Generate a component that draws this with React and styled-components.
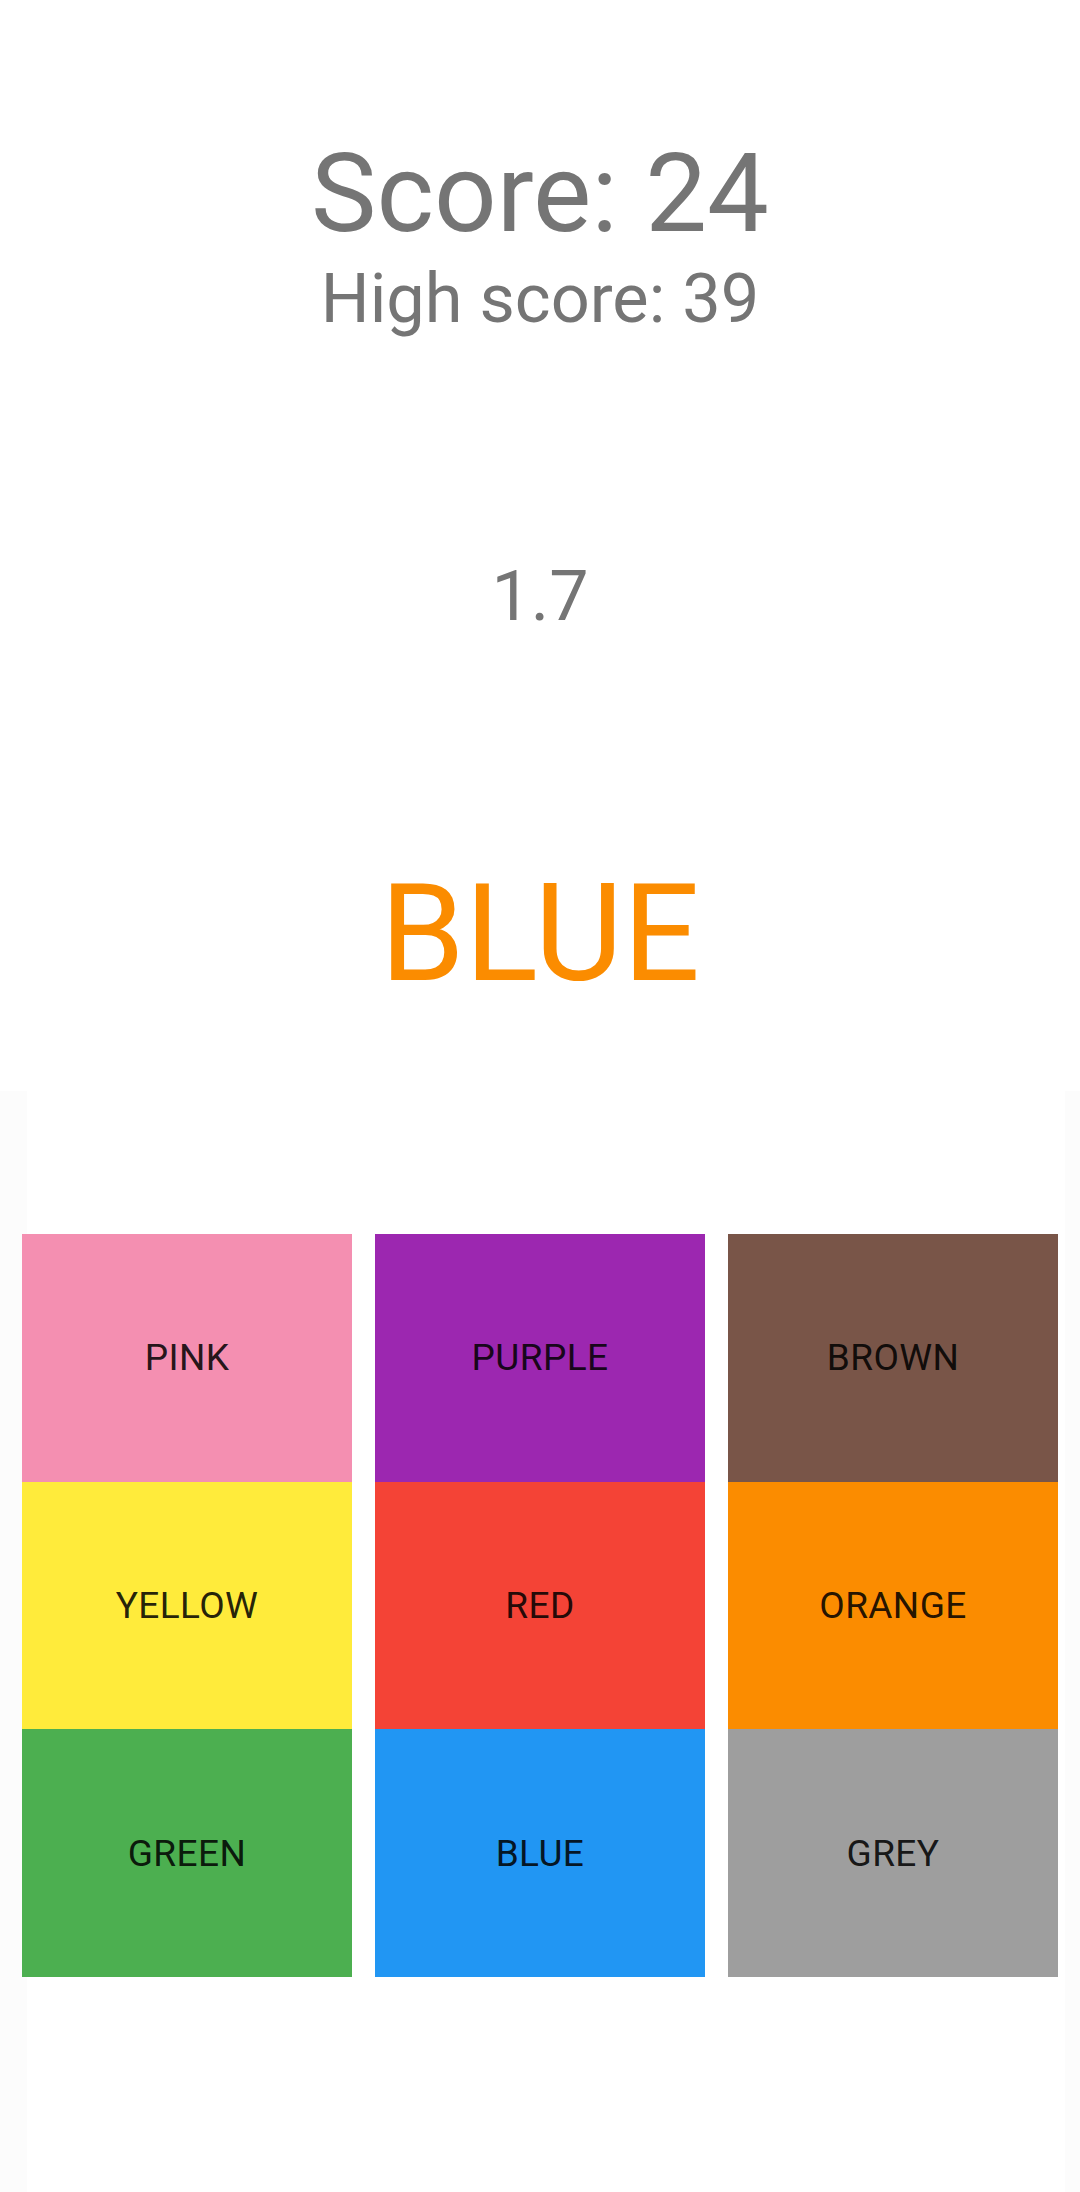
import React from "react";
import styled, { createGlobalStyle } from "styled-components";

const Global = createGlobalStyle`
  html, body { margin: 0; padding: 0; background: #ffffff; }
  body { font-family: Roboto, "Noto Sans", "Liberation Sans", sans-serif; }
  * { box-sizing: border-box; }
`;

const Page = styled.div`
  width: 1080px;
  height: 2192px;
  display: flex;
  flex-direction: column;
  background: #ffffff;
  overflow: hidden;
`;

const Header = styled.header`
  display: flex;
  flex-direction: column;
  align-items: center;
  padding-top: 139px;
  height: 1091px;
`;

const Score = styled.div`
  font-size: 110px;
  line-height: 110px;
  color: #757575;
  font-weight: 400;
`;

const HighScore = styled.div`
  margin-top: 16px;
  font-size: 68.5px;
  line-height: 68px;
  color: #757575;
`;

const Timer = styled.div`
  margin-top: 228px;
  font-size: 70px;
  line-height: 70px;
  color: #757575;
`;

const Word = styled.div`
  margin-top: 235px;
  font-size: 136px;
  line-height: 136px;
  color: ${(p) => p.$color};
`;

const Board = styled.section`
  flex: 1;
  background: #fcfcfc;
  padding: 0 15px 0 27px;
  display: flex;
`;

const Panel = styled.div`
  flex: 1;
  background: #ffffff;
  padding-top: 143px;
`;

const Grid = styled.div`
  margin: 0 7px 0 -5px;
  display: grid;
  grid-template-columns: repeat(3, 1fr);
  grid-auto-rows: 247.7px;
  column-gap: 23px;
`;

const Cell = styled.button`
  border: none;
  margin: 0;
  padding: 0;
  background: ${(p) => p.$bg};
  display: flex;
  align-items: center;
  justify-content: center;
  font-family: Roboto, "Noto Sans", "Liberation Sans", sans-serif;
  font-size: 37px;
  color: rgba(0, 0, 0, 0.87);
  letter-spacing: 0.4px;
  cursor: pointer;
`;

const colors = [
  ["PINK", "#F48FB1"],
  ["PURPLE", "#9C27B0"],
  ["BROWN", "#795548"],
  ["YELLOW", "#FFEB3B"],
  ["RED", "#F44336"],
  ["ORANGE", "#FB8C00"],
  ["GREEN", "#4CAF50"],
  ["BLUE", "#2196F3"],
  ["GREY", "#9E9E9E"],
];

export default function App() {
  return (
    <>
      <Global />
      <Page>
        <Header>
          <Score>Score: 24</Score>
          <HighScore>High score: 39</HighScore>
          <Timer>1.7</Timer>
          <Word $color="#FB8C00">BLUE</Word>
        </Header>
        <Board>
          <Panel>
            <Grid>
              {colors.map(([name, bg]) => (
                <Cell key={name} $bg={bg}>
                  {name}
                </Cell>
              ))}
            </Grid>
          </Panel>
        </Board>
      </Page>
    </>
  );
}
